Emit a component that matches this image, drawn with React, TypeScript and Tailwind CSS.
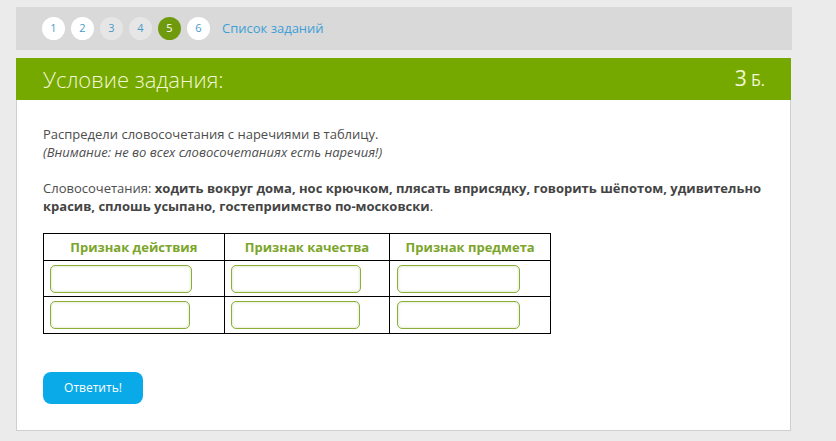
import React from "react";

const steps = [
  { n: 1, state: "done" },
  { n: 2, state: "done" },
  { n: 3, state: "seen" },
  { n: 4, state: "seen" },
  { n: 5, state: "active" },
  { n: 6, state: "done" },
];

const columns = ["Признак действия", "Признак качества", "Признак предмета"];

function Field({ w }: { w: string }) {
  return (
    <div
      className={`${w} h-[28px] rounded-[5px] border border-[#8caf3c] bg-white shadow-[inset_0_0_3px_rgba(120,160,40,0.35)]`}
    />
  );
}

export default function App() {
  return (
    <div className="min-h-[441px] bg-[#ebebeb] pt-[7px] font-['Open_Sans',sans-serif]">
      <div className="ml-[16px] flex h-[43px] w-[776px] items-center gap-[6px] bg-[#d9d9d9] pl-[26px]">
        {steps.map((s) => (
          <div
            key={s.n}
            className={
              s.state === "active"
                ? "flex h-[23px] w-[23px] items-center justify-center rounded-full bg-[#6f9a0e] text-[11px] text-white"
                : s.state === "seen"
                ? "flex h-[23px] w-[23px] items-center justify-center rounded-full bg-[#e6e6e6] text-[11px] text-[#4a9acb]"
                : "flex h-[23px] w-[23px] items-center justify-center rounded-full bg-white text-[11px] text-[#4a9acb]"
            }
          >
            {s.n}
          </div>
        ))}
        <span className="ml-[6px] text-[13px] text-[#3d9fd6]">Список заданий</span>
      </div>

      <div className="ml-[16px] mt-[8px] w-[775px]">
        <div className="flex h-[42px] items-center justify-between bg-[#76a900] pl-[27px] pr-[26px]">
          <span className="text-[22px] font-light text-[#f2f7d6]">Условие задания:</span>
          <span className="text-[#f2f7d6]">
            <span className="text-[21px]">3</span>
            <span className="text-[16px]"> Б.</span>
          </span>
        </div>

        <div className="h-[331px] border-x border-b border-[#cfcfcf] bg-white px-[26px] pt-[25px] text-[13px] leading-[18px] text-[#4d4d4d]">
          <p>Распредели словосочетания с наречиями в таблицу.</p>
          <p className="italic">(Внимание: не во всех словосочетаниях есть наречия!)</p>
          <p className="mt-[18px]">
            Словосочетания:{" "}
            <b className="font-bold text-[#444]">
              ходить вокруг дома, нос крючком, плясать вприсядку, говорить шёпотом, удивительно
              красив, сплошь усыпано, гостеприимство по-московски
            </b>
            .
          </p>

          <table className="mt-[18px] w-[508px] border-collapse border border-black">
            <thead>
              <tr className="h-[27px]">
                {columns.map((c, i) => (
                  <th
                    key={c}
                    className={`border border-black text-[13px] font-bold text-[#7ba52b] ${
                      i === 0 ? "w-[181px]" : i === 1 ? "w-[166px]" : "w-[161px]"
                    }`}
                  >
                    {c}
                  </th>
                ))}
              </tr>
            </thead>
            <tbody>
              <tr className="h-[36px]">
                <td className="border border-black pl-[6px]">
                  <Field w="w-[142px]" />
                </td>
                <td className="border border-black pl-[6px]">
                  <Field w="w-[130px]" />
                </td>
                <td className="border border-black pl-[7px]">
                  <Field w="w-[123px]" />
                </td>
              </tr>
              <tr className="h-[37px]">
                <td className="border border-black pl-[6px]">
                  <Field w="w-[140px]" />
                </td>
                <td className="border border-black pl-[6px]">
                  <Field w="w-[129px]" />
                </td>
                <td className="border border-black pl-[7px]">
                  <Field w="w-[123px]" />
                </td>
              </tr>
            </tbody>
          </table>

          <button className="mt-[38px] h-[32px] w-[100px] rounded-[8px] bg-[#0aaae8] text-[12px] text-white">
            Ответить!
          </button>
        </div>
      </div>
    </div>
  );
}
